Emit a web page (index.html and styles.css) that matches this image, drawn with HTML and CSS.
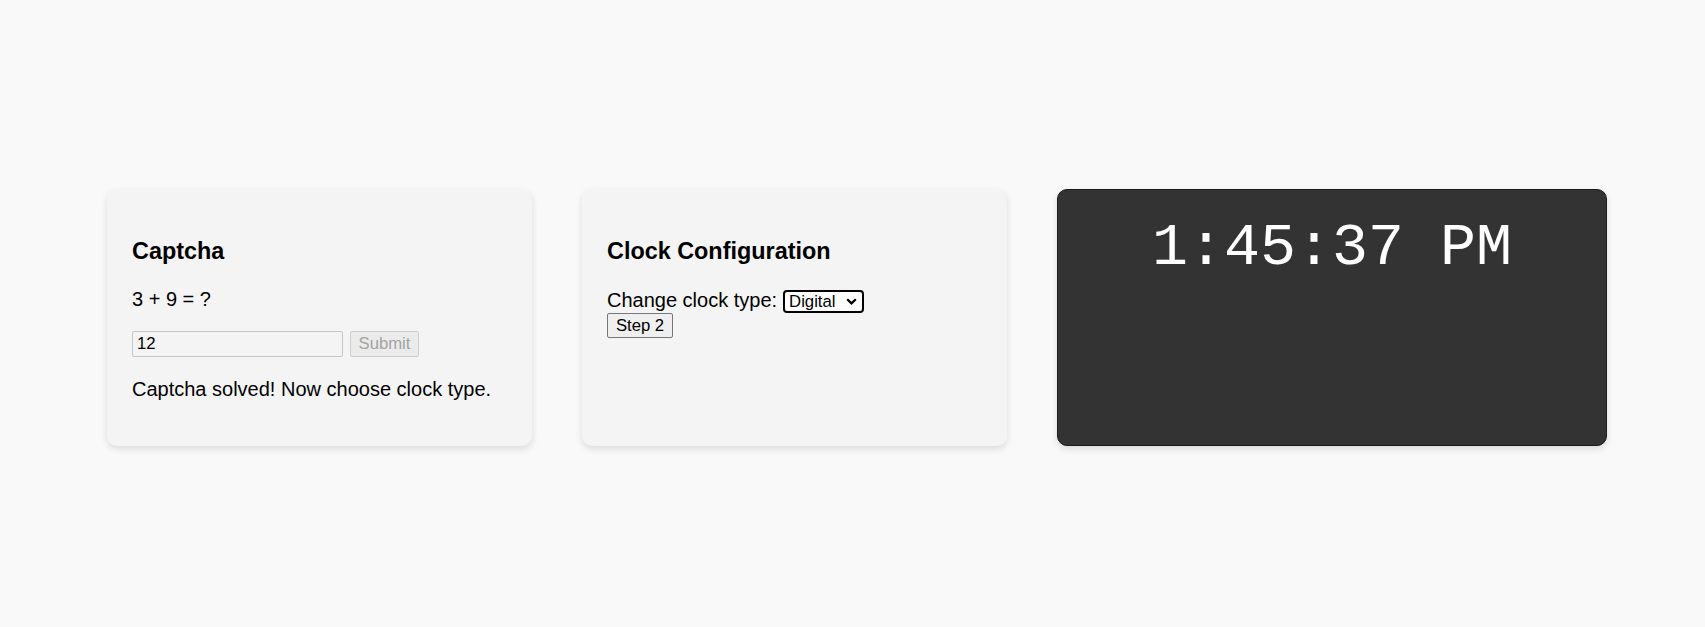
FILE: index.html
```html
<!DOCTYPE html>
<html lang="en">
<head>
<meta charset="utf-8">
<title>Captcha Clock</title>
<link rel="stylesheet" href="styles.css">
</head>
<body>
<main class="row">
  <section class="card">
    <h3 class="card-title">Captcha</h3>
    <p class="text">3 + 9 = ?</p>
    <div class="answer">
      <input class="answer-input" type="text" value="12" disabled>
      <button class="btn-submit" disabled>Submit</button>
    </div>
    <p class="text text-last">Captcha solved! Now choose clock type.</p>
  </section>
  <section class="card">
    <h3 class="card-title">Clock Configuration</h3>
    <div class="config-line">
      <span class="label">Change clock type:</span>
      <span class="select">Digital
        <svg class="chev" width="11" height="7" viewBox="0 0 11 7"><path d="M1.2 1.2 L5.5 5.4 L9.8 1.2" fill="none" stroke="#000" stroke-width="2.2"/></svg>
      </span>
    </div>
    <div class="step-line"><button class="btn-step">Step 2</button></div>
  </section>
  <section class="clock">
    <div class="clock-time">1:45:37 PM</div>
  </section>
</main>
</body>
</html>
```

FILE: styles.css
```css
html, body {
  margin: 0;
  padding: 0;
}
body {
  background: #f9f9f9;
  font-family: "Liberation Sans", Arial, sans-serif;
  font-size: 20px;
  color: #000;
  width: 1705px;
  height: 627px;
  overflow: hidden;
}
.row {
  display: flex;
  align-items: stretch;
  gap: 50px;
  padding: 189px 0 0 107px;
}
.card {
  box-sizing: border-box;
  width: 425px;
  padding: 26px 25px 25px;
  background: #f4f4f4;
  border-radius: 10px;
  box-shadow: 0 3px 7px rgba(0, 0, 0, 0.12);
}
.card-title {
  font-size: 23.4px;
  line-height: 27px;
  font-weight: bold;
  margin: 23px 0;
}
.text {
  margin: 20px 0;
  line-height: 23px;
}
.text-last {
  margin-top: 21px;
}
.answer {
  display: flex;
  gap: 7px;
  height: 26px;
  margin-top: 1px;
}
.answer-input {
  box-sizing: border-box;
  width: 211px;
  height: 26px;
  margin: 0;
  padding: 0 4px;
  font-family: "Liberation Sans", Arial, sans-serif;
  font-size: 16.7px;
  color: #000;
  background: #f4f4f4;
  border: 1px solid #c6c6c6;
  border-radius: 2px;
}
.btn-submit {
  box-sizing: border-box;
  width: 69px;
  height: 26px;
  margin: 0;
  padding: 0;
  font-family: "Liberation Sans", Arial, sans-serif;
  font-size: 16.7px;
  color: #a3a3a3;
  background: #ebebeb;
  border: 1px solid #cdcdcd;
  border-radius: 2px;
}
.config-line {
  display: flex;
  align-items: center;
  height: 25px;
  line-height: 23px;
}
.label {
  margin-right: 6px;
}
.select {
  box-sizing: border-box;
  display: inline-flex;
  align-items: center;
  justify-content: space-between;
  width: 81px;
  height: 23px;
  margin-top: 2px;
  padding: 0 5px 0 4px;
  font-size: 16.7px;
  border: 2px solid #000;
  border-radius: 4px;
  background: #fff;
}
.chev {
  display: block;
}
.step-line {
  display: flex;
}
.btn-step {
  box-sizing: border-box;
  width: 66px;
  height: 25px;
  margin: 0;
  padding: 0;
  font-family: "Liberation Sans", Arial, sans-serif;
  font-size: 16.7px;
  color: #000;
  background: #efefef;
  border: 1px solid #767676;
  border-radius: 2px;
}
.clock {
  box-sizing: border-box;
  width: 550px;
  padding: 24px 25px 25px;
  background: #333;
  border: 1px solid #1c1c1c;
  border-radius: 10px;
  box-shadow: 0 3px 7px rgba(0, 0, 0, 0.12);
  color: #fff;
  text-align: center;
}
.clock-time {
  font-family: "Liberation Mono", "Courier New", monospace;
  font-size: 60px;
  line-height: normal;
}
```
